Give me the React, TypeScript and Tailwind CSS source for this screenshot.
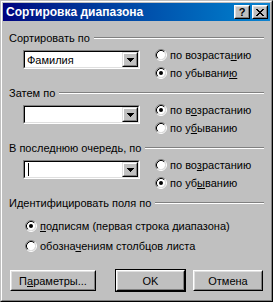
import React from "react";

const raisedOuter = "border border-t-white border-l-white border-r-black border-b-black";
const raisedInner = "border border-t-[#dfdfdf] border-l-[#dfdfdf] border-r-[#808080] border-b-[#808080]";

const Radio = ({ checked }: { checked?: boolean }) => (
  <svg width="12" height="12" viewBox="0 0 12 12" className="shrink-0">
    <circle cx="6" cy="6" r="4.2" fill="#fff" />
    <path d="M2.11 9.89 A5.5 5.5 0 0 1 9.89 2.11" stroke="#808080" fill="none" />
    <path d="M9.89 2.11 A5.5 5.5 0 0 1 2.11 9.89" stroke="#fff" fill="none" />
    <path d="M2.82 9.18 A4.5 4.5 0 0 1 9.18 2.82" stroke="#000" fill="none" />
    <path d="M9.18 2.82 A4.5 4.5 0 0 1 2.82 9.18" stroke="#dfdfdf" fill="none" />
    {checked && <circle cx="6" cy="6" r="2" fill="#000" />}
  </svg>
);

const DownArrow = () => (
  <svg width="7" height="4" viewBox="0 0 7 4">
    <rect x="0" y="0" width="7" height="1" fill="#000" />
    <rect x="1" y="1" width="5" height="1" fill="#000" />
    <rect x="2" y="2" width="3" height="1" fill="#000" />
    <rect x="3" y="3" width="1" height="1" fill="#000" />
  </svg>
);

const xRows = ["11000011", "01100110", "00111100", "00011000", "00111100", "01100110", "11000011"];

const CloseGlyph = () => (
  <svg width="8" height="7" viewBox="0 0 8 7">
    {xRows.map((row, y) =>
      row.split("").map((c, x) =>
        c === "1" ? <rect key={`${x}-${y}`} x={x} y={y} width="1" height="1" fill="#000" /> : null
      )
    )}
  </svg>
);

const CaptionButton = ({ children, className = "" }: { children: React.ReactNode; className?: string }) => (
  <div className={`h-[14px] w-[16px] bg-[#c0c0c0] ${raisedOuter} ${className}`}>
    <div className={`flex h-full w-full items-center justify-center ${raisedInner}`}>{children}</div>
  </div>
);

const Combo = ({ value, caret }: { value?: string; caret?: boolean }) => (
  <div className="ml-[14px] mt-[5px] h-[19px] w-[117px] border border-t-[#808080] border-l-[#808080] border-r-white border-b-white">
    <div className="flex h-full w-full border border-t-black border-l-black border-r-[#dfdfdf] border-b-[#dfdfdf] bg-white">
      <div className="flex flex-1 items-center pl-[2px]">
        {caret && <div className="ml-px h-[13px] w-px bg-black" />}
        {value}
      </div>
      <div className={`h-full w-[16px] bg-[#c0c0c0] ${raisedOuter.replace("border-t-white border-l-white", "border-t-[#dfdfdf] border-l-[#dfdfdf]")}`}>
        <div className="flex h-full w-full items-center justify-center border border-t-white border-l-white border-r-[#808080] border-b-[#808080]">
          <DownArrow />
        </div>
      </div>
    </div>
  </div>
);

const SectionLabel = ({ children }: { children: React.ReactNode }) => (
  <div className="flex h-[14px] items-center">
    <span className="whitespace-nowrap">{children}</span>
    <div className="ml-[4px] flex-1">
      <div className="h-px bg-[#808080]" />
      <div className="h-px bg-white" />
    </div>
  </div>
);

const RadioRow = ({ checked, children, h = "h-[18px]" }: { checked?: boolean; children: React.ReactNode; h?: string }) => (
  <div className={`flex ${h} items-center gap-[3px] whitespace-nowrap`}>
    <Radio checked={checked} />
    <span>{children}</span>
  </div>
);

const SortSection = ({
  label,
  value,
  caret,
  asc,
  desc,
  ascChecked,
}: {
  label: string;
  value?: string;
  caret?: boolean;
  asc: React.ReactNode;
  desc: React.ReactNode;
  ascChecked: boolean;
}) => (
  <div className="h-[55px]">
    <SectionLabel>{label}</SectionLabel>
    <div className="flex">
      <Combo value={value} caret={caret} />
      <div className="ml-[15px] mt-px">
        <RadioRow checked={ascChecked}>{asc}</RadioRow>
        <RadioRow checked={!ascChecked}>{desc}</RadioRow>
      </div>
    </div>
  </div>
);

const Button = ({ children, width }: { children: React.ReactNode; width: string }) => (
  <div className={`h-[21px] ${width} bg-[#c0c0c0] ${raisedOuter}`}>
    <div className={`flex h-full w-full items-center justify-center ${raisedInner}`}>{children}</div>
  </div>
);

export default function App() {
  return (
    <div className="h-[302px] w-[273px] font-['Liberation_Sans',Arial,sans-serif] text-[11px] leading-[14px] text-black">
      <div className="h-full border border-t-[#c0c0c0] border-l-[#c0c0c0] border-r-black border-b-black">
        <div className="flex h-full flex-col border border-t-white border-l-white border-r-[#808080] border-b-[#808080] bg-[#c0c0c0] p-px">
          {/* Title bar */}
          <div className="flex h-[18px] items-center bg-gradient-to-r from-[#000080] to-[#1084d0] pl-[3px] pr-[2px]">
            <span className="flex-1 text-[12px] font-bold text-white">Сортировка диапазона</span>
            <CaptionButton>
              <span className="text-[11px] font-bold leading-none">?</span>
            </CaptionButton>
            <CaptionButton className="ml-[2px]">
              <CloseGlyph />
            </CaptionButton>
          </div>

          {/* Body */}
          <div className="px-[6px] pt-[10px]">
            <SortSection
              label="Сортировать по"
              value="Фамилия"
              ascChecked={false}
              asc={<>по возраста<u>н</u>ию</>}
              desc={<>по убывани<u>ю</u></>}
            />
            <SortSection
              label="Затем по"
              ascChecked={true}
              asc={<>по в<u>о</u>зрастанию</>}
              desc={<>по у<u>б</u>ыванию</>}
            />
            <SortSection
              label="В последнюю очередь, по"
              caret
              ascChecked={false}
              asc={<>по во<u>з</u>растанию</>}
              desc={<>по уб<u>ы</u>ванию</>}
            />
            <div>
              <SectionLabel>Идентифицировать поля по</SectionLabel>
              <div className="ml-[16px] mt-[6px]">
                <RadioRow checked h="h-[20px]">
                  <u>п</u>одписям (первая строка диапазона)
                </RadioRow>
                <RadioRow h="h-[20px]">
                  обозна<u>ч</u>ениям столбцов листа
                </RadioRow>
              </div>
            </div>
          </div>

          {/* Buttons */}
          <div className="ml-[7px] mt-[14px] flex">
            <Button width="w-[86px]">
              <span>
                П<u>а</u>раметры...
              </span>
            </Button>
            <div className="ml-[19px] h-[23px] w-[71px] -mt-px border border-black">
              <Button width="w-full">OK</Button>
            </div>
            <div className="ml-[7px]">
              <Button width="w-[70px]">Отмена</Button>
            </div>
          </div>
        </div>
      </div>
    </div>
  );
}
